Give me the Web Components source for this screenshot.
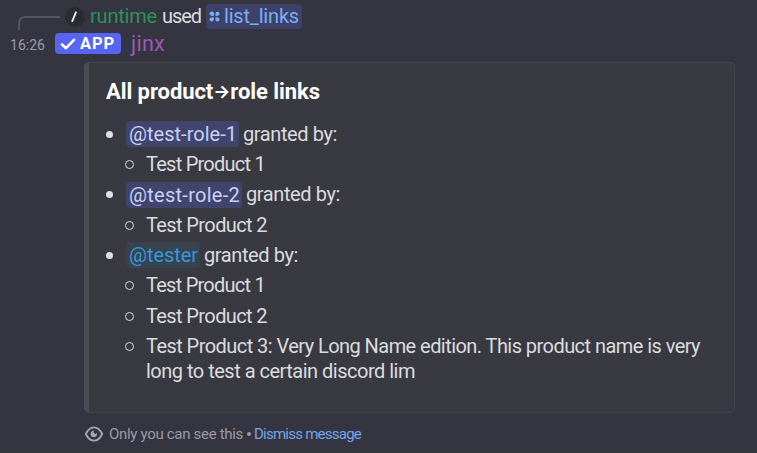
<!DOCTYPE html>
<html lang="en">
<head>
<meta charset="utf-8">
<title>list_links</title>
<style>
html,body{margin:0;height:100%;background:#343541;overflow:hidden;font-family:Roboto,"Noto Sans",sans-serif}
</style>
</head>
<body>
<chat-message></chat-message>
<script>
// Text run tracked so that it fills the width given by its "w" attribute.
class FitText extends HTMLElement{
  constructor(){
    super();
    this.attachShadow({mode:'open'}).innerHTML=`<style>:host{display:inline-block;white-space:pre;flex:none}span{display:inline-block}</style><span><slot></slot></span>`;
  }
  connectedCallback(){
    const s=this.shadowRoot.querySelector('span'),w=+this.getAttribute('w'),n=this.textContent.length;
    s.style.letterSpacing='0px';
    const real=s.getBoundingClientRect().width;
    s.style.letterSpacing=((w-real)/n).toFixed(3)+'px';
    this.style.width=w+'px';
  }
}
customElements.define('fit-text',FitText);

class RoleMention extends HTMLElement{
  constructor(){
    super();
    this.attachShadow({mode:'open'}).innerHTML=`<style>
    :host{display:inline-flex;box-sizing:border-box;height:26px;line-height:26px;margin-right:-1px;padding:0 2px 0 3px;border-radius:4px;background:#41446b;color:#c9d2fb;flex:none}
    :host([tone=blue]){background:#37444f;color:#3498db}
    </style><slot></slot>`;
  }
}
customElements.define('role-mention',RoleMention);

class ListRow extends HTMLElement{
  constructor(){
    super();
    this.attachShadow({mode:'open'}).innerHTML=`<style>
    :host{display:flex;align-items:flex-start;line-height:25px;font-size:20px;color:#dbdcdf}
    i{flex:none;box-sizing:border-box;width:7px;height:7px;border-radius:50%;background:#dfe0e3;margin:9px 13px 0 -1px}
    :host([sub]) i{background:none;border:1.2px solid #dbdcdf;width:9px;height:9px;margin:8px 12px 0 18px}
    div{display:flex;align-items:center;height:25px;gap:5px}
    :host([two]) div{display:block;height:50px}
    </style><i></i><div><slot></slot></div>`;
  }
}
customElements.define('list-row',ListRow);

class EmbedCard extends HTMLElement{
  constructor(){
    super();
    this.attachShadow({mode:'open'}).innerHTML=`<style>
    :host{display:block;box-sizing:border-box;width:651px;height:351px;margin:0 0 0 84px;border:1px solid #44454c;border-left:5px solid #4c4d55;border-radius:5px;background:#393a41;padding:16px 0 0 18px}
    h3{margin:0 0 17.5px -1px;font-size:22px;line-height:25px;height:25px;color:#fff;font-weight:700}
    section{display:flex;flex-direction:column;gap:5.35px}
    </style><h3><slot name="title"></slot></h3><section><slot></slot></section>`;
  }
}
customElements.define('embed-card',EmbedCard);

class SlashHeader extends HTMLElement{
  constructor(){
    super();
    this.attachShadow({mode:'open'}).innerHTML=`<style>
    :host{display:flex;align-items:center;height:25px;font-size:20px;line-height:25px;padding:4px 0 0 18px;color:#dbdcdf}
    .spine{width:42px;height:14px;margin-top:13px;box-sizing:border-box;border:solid #55565f;border-width:2px 0 0 2px;border-top-left-radius:7px}
    .av{margin-left:5px;width:20px;height:20px}
    .user{color:#2f9159;margin:0 5px}
    .cmd{display:flex;align-items:center;box-sizing:border-box;width:96px;height:25px;margin-left:5px;padding-left:3px;border-radius:4px;background:#3e4269;color:#7aaef5}
    .cmd svg{margin-right:4px}
    </style>
    <span class="spine"></span>
    <svg class="av" viewBox="0 0 20 20"><circle cx="10" cy="10" r="10" fill="#2b2c31"/><path d="M7 14.8 11.2 4.6" stroke="#f2f3f5" stroke-width="1.8" fill="none"/></svg>
    <fit-text class="user" w="67">runtime</fit-text><fit-text w="39">used</fit-text>
    <span class="cmd"><svg width="11" height="11" viewBox="0 0 11 11" fill="#7aaef5"><circle cx="2.8" cy="2.6" r="2.2"/><path d="M2.8 2.6H5v2.2H2.8Z"/><circle cx="8.5" cy="2.8" r="2"/><path d="M6.5 2.8h2v2h-2Z"/><circle cx="2.6" cy="8.5" r="2.1"/><path d="M2.6 6.4H4.7v2.1H2.6Z"/><circle cx="8.5" cy="8.5" r="2"/><path d="M6.5 6.5h2v2h-2Z"/></svg><fit-text w="75">list_links</fit-text></span>`;
  }
}
customElements.define('slash-header',SlashHeader);

class AuthorLine extends HTMLElement{
  constructor(){
    super();
    this.attachShadow({mode:'open'}).innerHTML=`<style>
    :host{display:flex;align-items:center;height:25px;padding:2px 0 0 10px;line-height:25px}
    .time{font-size:14px;color:#9a9ba3;margin-top:4px}
    .tag{display:flex;align-items:center;box-sizing:border-box;width:66px;height:21px;margin:0 10px 0 10px;padding-left:5px;border-radius:4px;background:#5865f2;color:#fff;font-size:16.5px;line-height:21px;font-weight:700}
    .tag svg{margin-right:4px}
    .name{font-size:21.5px;color:#9b59b6}
    </style>
    <fit-text class="time" w="35">16:26</fit-text>
    <span class="tag"><svg width="16" height="16" viewBox="0 0 16 16"><path d="M2 8.5 6 12.2 14 3.8" fill="none" stroke="#fff" stroke-width="2.6" stroke-linecap="round" stroke-linejoin="round"/></svg><fit-text w="35">APP</fit-text></span>
    <fit-text class="name" w="34">jinx</fit-text>`;
  }
}
customElements.define('author-line',AuthorLine);

class PrivateNote extends HTMLElement{
  constructor(){
    super();
    this.attachShadow({mode:'open'}).innerHTML=`<style>
    :host{display:flex;align-items:center;height:20px;line-height:20px;margin-top:11px;padding-left:84px;font-size:15px;color:#9a9ba3}
    svg{margin-right:5px}
    b{width:4px;height:4px;border-radius:50%;background:#9a9ba3;margin:0 3px 0 4px}
    .link{color:#74a4ea}
    </style>
    <svg width="20" height="18" viewBox="0 0 20 18"><path d="M1.8 9C4 4.5 6.7 2.3 10 2.3S16 4.5 18.2 9C16 13.5 13.3 15.7 10 15.7S4 13.5 1.8 9Z" fill="none" stroke="#a7a8af" stroke-width="1.8" stroke-linejoin="round"/><path d="M10 5.6A1.8 1.8 0 0 0 13 8.1 3.3 3.3 0 1 1 10 5.6Z" fill="#a7a8af"/></svg>
    <fit-text w="134">Only you can see this</fit-text><b></b><fit-text class="link" w="107">Dismiss message</fit-text>`;
  }
}
customElements.define('private-note',PrivateNote);

class ChatMessage extends HTMLElement{
  constructor(){
    super();
    this.attachShadow({mode:'open'}).innerHTML=`<style>
    :host{display:flex;flex-direction:column;box-sizing:border-box;height:453px;border-top:3px solid #35363b;border-bottom:4px solid #35363b;background:#343541}
    slash-header{margin-top:-3px}
    author-line{margin:0 0 6px}
    .arrow{font-family:Inter,sans-serif;font-size:18px;line-height:1;vertical-align:1.5px}
    </style>
    <slash-header></slash-header><author-line></author-line>
    <embed-card>
      <fit-text slot="title" w="214">All product<span class="arrow">→</span>role links</fit-text>
      <list-row><role-mention><fit-text w="108">@test-role-1</fit-text></role-mention><fit-text w="94">granted by:</fit-text></list-row>
      <list-row sub><fit-text w="119">Test Product 1</fit-text></list-row>
      <list-row><role-mention><fit-text w="111">@test-role-2</fit-text></role-mention><fit-text w="94">granted by:</fit-text></list-row>
      <list-row sub><fit-text w="121">Test Product 2</fit-text></list-row>
      <list-row><role-mention tone="blue"><fit-text w="69">@tester</fit-text></role-mention><fit-text w="94">granted by:</fit-text></list-row>
      <list-row sub><fit-text w="119">Test Product 1</fit-text></list-row>
      <list-row sub><fit-text w="121">Test Product 2</fit-text></list-row>
      <list-row sub two><fit-text w="554">Test Product 3: Very Long Name edition. This product name is very</fit-text><br><fit-text w="269">long to test a certain discord lim</fit-text></list-row>
    </embed-card>
    <private-note></private-note>`;
  }
}
customElements.define('chat-message',ChatMessage);
</script>
</body>
</html>
